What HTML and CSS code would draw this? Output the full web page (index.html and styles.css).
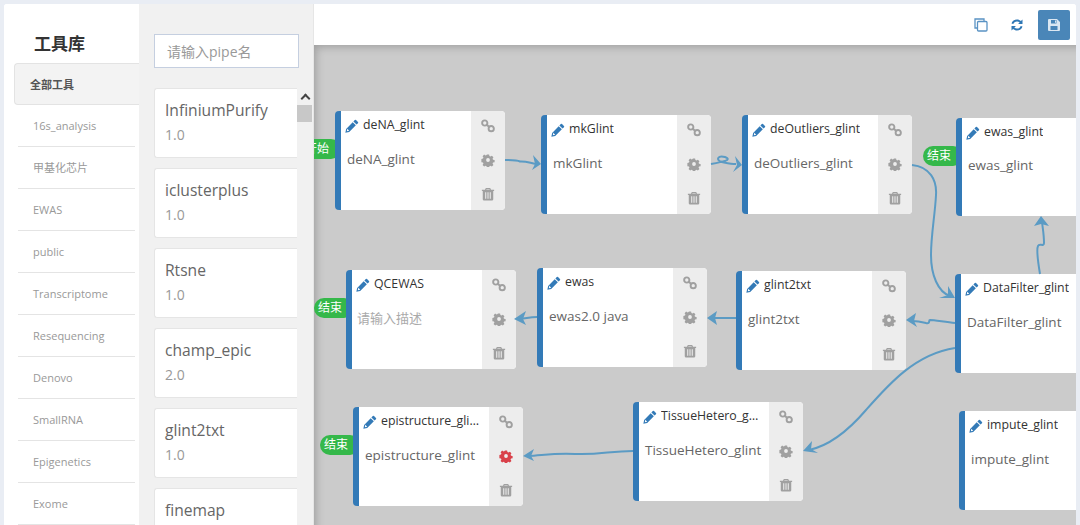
FILE: index.html
```html
<!DOCTYPE html>
<html lang="zh">
<head>
<meta charset="utf-8">
<title>工具库</title>
<link rel="stylesheet" href="styles.css">
</head>
<body>
<svg class="defs" width="0" height="0">
  <defs>
    <symbol id="i-pencil" viewBox="0 0 16 16"><path d="M11.2 1.2a1 1 0 0 1 1.4 0l2.2 2.2a1 1 0 0 1 0 1.4l-1.6 1.6-3.6-3.6zM8.8 3.6l3.6 3.6-7.6 7.6-4.4.9.9-4.4zM2.6 11.2l-.5 2.7 2.7-.5z" fill-rule="evenodd"/></symbol>
    <symbol id="i-link" viewBox="0 0 16 16"><g fill="none" stroke="currentColor" stroke-width="2.200"><circle cx="4.300" cy="4.600" r="3"/><circle cx="11.700" cy="11" r="3"/><path d="M6.500 6.600l3 2.600"/></g></symbol>
    <symbol id="i-cog" viewBox="0 0 16 16"><path fill-rule="evenodd" d="M6.600 1h2.800l.4 2 1.300.6 1.800-1.100 2 2-1.100 1.800.6 1.300 2 .4v2.800l-2 .4-.6 1.300 1.100 1.800-2 2-1.800-1.100-1.300.6-.4 2H6.600l-.4-2-1.300-.6-1.800 1.100-2-2 1.100-1.800-.6-1.300-2-.4V6.600l2-.4.6-1.300-1.100-1.800 2-2 1.800 1.100 1.300-.6zM8 5.600a2.400 2.400 0 1 0 0 4.800 2.400 2.400 0 0 0 0-4.800z" transform="translate(.8 .8) scale(.9)"/></symbol>
    <symbol id="i-trash" viewBox="0 0 16 16"><path fill-rule="evenodd" d="M5.500 1h5l1 2H15v1.500h-1V14a1.500 1.500 0 0 1-1.500 1.500h-9A1.500 1.500 0 0 1 2 14V4.500H1V3h3.500zM6.300 2.500 6 3h4l-.3-.5zM4.800 6v7.500H6V6zm2.600 0v7.500h1.200V6zM10 6v7.500h1.200V6z"/></symbol>
  </defs>
</svg>
<div class="app">
  <aside class="library">
    <h2 class="library-title">工具库</h2>
    <ul class="tabs">
      <li class="tab tab-active">全部工具</li>
      <li class="tab">16s_analysis</li>
      <li class="tab">甲基化芯片</li>
      <li class="tab">EWAS</li>
      <li class="tab">public</li>
      <li class="tab">Transcriptome</li>
      <li class="tab">Resequencing</li>
      <li class="tab">Denovo</li>
      <li class="tab">SmallRNA</li>
      <li class="tab">Epigenetics</li>
      <li class="tab">Exome</li>
    </ul>
  </aside>
  <section class="pipes">
    <input class="search" type="text" placeholder="请输入pipe名">
    <div class="pipe-scroll">
      <div class="pipe-list">
        <div class="pipe"><div class="pipe-name">InfiniumPurify</div><div class="pipe-ver">1.0</div></div>
        <div class="pipe"><div class="pipe-name">iclusterplus</div><div class="pipe-ver">1.0</div></div>
        <div class="pipe"><div class="pipe-name">Rtsne</div><div class="pipe-ver">1.0</div></div>
        <div class="pipe"><div class="pipe-name">champ_epic</div><div class="pipe-ver">2.0</div></div>
        <div class="pipe"><div class="pipe-name">glint2txt</div><div class="pipe-ver">1.0</div></div>
        <div class="pipe"><div class="pipe-name">finemap</div></div>
      </div>
      <div class="scrollbar"><span class="scroll-up"></span><span class="scroll-thumb"></span></div>
    </div>
  </section>
  <main class="workspace">
    <header class="toolbar">
      <button class="tool-btn" type="button" aria-label="复制">
        <svg width="14" height="14" viewBox="0 0 14 14" fill="none" stroke="#5a93c4" stroke-width="1.300"><path d="M3.500 10H1V1h9v2.500"/><rect x="3.500" y="3.500" width="9.500" height="9.500" rx="1"/></svg>
      </button>
      <button class="tool-btn" type="button" aria-label="刷新">
        <svg width="14" height="14" viewBox="0 0 14 14" fill="#2f77b5"><path d="M1.500 5.600C2.200 3 4.400 1.500 7 1.500c1.500 0 2.900.6 3.900 1.500L12.500 1.500v4.600H8l1.700-1.700A4 4 0 0 0 7 3.400c-1.800 0-3.200 1-3.700 2.600zM12.500 8.400c-.7 2.600-2.900 4.100-5.500 4.100-1.500 0-2.900-.6-3.900-1.500L1.500 12.500V7.900H6L4.300 9.600A4 4 0 0 0 7 10.600c1.800 0 3.200-1 3.700-2.600z"/></svg>
      </button>
      <button class="save-btn" type="button" aria-label="保存">
        <svg width="12" height="12" viewBox="0 0 12 12" fill="#dbe7f2"><path fill-rule="evenodd" d="M1 0h8l3 3v8a1 1 0 0 1-1 1H1a1 1 0 0 1-1-1V1a1 1 0 0 1 1-1zm2 1v3.500h5.500V1zm4 .5h1v2.300H7zM2.500 7v4h7V7z"/></svg>
      </button>
    </header>
    <div class="canvas">
      <span class="badge b1">开始</span>
      <span class="badge b2">结束</span>
      <span class="badge b3">结束</span>
      <span class="badge b4">结束</span>

      <article class="node n1"><div class="node-main"><div class="node-title"><svg class="pencil"><use href="#i-pencil"/></svg><span class="node-name">deNA_glint</span></div><div class="node-desc">deNA_glint</div></div><div class="node-actions"><svg class="act"><use href="#i-link"/></svg><svg class="act"><use href="#i-cog"/></svg><svg class="act"><use href="#i-trash"/></svg></div></article>

      <article class="node n2"><div class="node-main"><div class="node-title"><svg class="pencil"><use href="#i-pencil"/></svg><span class="node-name">mkGlint</span></div><div class="node-desc">mkGlint</div></div><div class="node-actions"><svg class="act"><use href="#i-link"/></svg><svg class="act"><use href="#i-cog"/></svg><svg class="act"><use href="#i-trash"/></svg></div></article>

      <article class="node n3"><div class="node-main"><div class="node-title"><svg class="pencil"><use href="#i-pencil"/></svg><span class="node-name">deOutliers_glint</span></div><div class="node-desc">deOutliers_glint</div></div><div class="node-actions"><svg class="act"><use href="#i-link"/></svg><svg class="act"><use href="#i-cog"/></svg><svg class="act"><use href="#i-trash"/></svg></div></article>

      <article class="node n4"><div class="node-main"><div class="node-title"><svg class="pencil"><use href="#i-pencil"/></svg><span class="node-name">ewas_glint</span></div><div class="node-desc">ewas_glint</div></div><div class="node-actions"><svg class="act"><use href="#i-link"/></svg><svg class="act"><use href="#i-cog"/></svg><svg class="act"><use href="#i-trash"/></svg></div></article>

      <article class="node n5"><div class="node-main"><div class="node-title"><svg class="pencil"><use href="#i-pencil"/></svg><span class="node-name">QCEWAS</span></div><div class="node-desc node-empty">请输入描述</div></div><div class="node-actions"><svg class="act"><use href="#i-link"/></svg><svg class="act"><use href="#i-cog"/></svg><svg class="act"><use href="#i-trash"/></svg></div></article>

      <article class="node n6"><div class="node-main"><div class="node-title"><svg class="pencil"><use href="#i-pencil"/></svg><span class="node-name">ewas</span></div><div class="node-desc">ewas2.0 java</div></div><div class="node-actions"><svg class="act"><use href="#i-link"/></svg><svg class="act"><use href="#i-cog"/></svg><svg class="act"><use href="#i-trash"/></svg></div></article>

      <article class="node n7"><div class="node-main"><div class="node-title"><svg class="pencil"><use href="#i-pencil"/></svg><span class="node-name">glint2txt</span></div><div class="node-desc">glint2txt</div></div><div class="node-actions"><svg class="act"><use href="#i-link"/></svg><svg class="act"><use href="#i-cog"/></svg><svg class="act"><use href="#i-trash"/></svg></div></article>

      <article class="node n8"><div class="node-main"><div class="node-title"><svg class="pencil"><use href="#i-pencil"/></svg><span class="node-name">DataFilter_glint</span></div><div class="node-desc">DataFilter_glint</div></div><div class="node-actions"><svg class="act"><use href="#i-link"/></svg><svg class="act"><use href="#i-cog"/></svg><svg class="act"><use href="#i-trash"/></svg></div></article>

      <article class="node n9"><div class="node-main"><div class="node-title"><svg class="pencil"><use href="#i-pencil"/></svg><span class="node-name">epistructure_glint</span></div><div class="node-desc">epistructure_glint</div></div><div class="node-actions"><svg class="act"><use href="#i-link"/></svg><svg class="act act-error"><use href="#i-cog"/></svg><svg class="act"><use href="#i-trash"/></svg></div></article>

      <article class="node n10"><div class="node-main"><div class="node-title"><svg class="pencil"><use href="#i-pencil"/></svg><span class="node-name">TissueHetero_glint</span></div><div class="node-desc">TissueHetero_glint</div></div><div class="node-actions"><svg class="act"><use href="#i-link"/></svg><svg class="act"><use href="#i-cog"/></svg><svg class="act"><use href="#i-trash"/></svg></div></article>

      <article class="node n11"><div class="node-main"><div class="node-title"><svg class="pencil"><use href="#i-pencil"/></svg><span class="node-name">impute_glint</span></div><div class="node-desc">impute_glint</div></div><div class="node-actions"><svg class="act"><use href="#i-link"/></svg><svg class="act"><use href="#i-cog"/></svg><svg class="act"><use href="#i-trash"/></svg></div></article>

      <svg class="links" viewBox="314 45 762 480">
        <g class="link-lines">
          <path d="M505 160C513 160 517 160 520 161.500C526 161 530 163 536 164"/>
          <path d="M711 164C722 162 733 160 725 157C718 155 715 160 722 162C727 163 731 164 736 164"/>
          <path d="M912 165C930 167 937 180 936 195C935 215 931 235 931 255C931 275 938 292 950 296"/>
          <path d="M1040 274C1038 262 1036 250 1038 246C1039 243 1044 247 1044 243C1044 235 1043 230 1042 222"/>
          <path d="M955 323C945 322 934 320 930 320C928 320 931 324 926 323C922 322 918 321 912 321"/>
          <path d="M955 348C915 354 888 385 866 410C848 431 828 446 809 450"/>
          <path d="M736 318H712"/>
          <path d="M537 317C530 317 528 318 520 319"/>
          <path d="M633 451C610 451 600 455 575 454C555 453 545 455 528 456"/>
        </g>
        <g class="link-heads">
          <path d="M541 164L533 155 535 164 532 170z"/>
          <path d="M742 165L735 156 737 165 733 172z"/>
          <path d="M955 298L948 286 948 295 939 298z"/>
          <path d="M1041 216L1034 226 1041 224 1049 226z"/>
          <path d="M906 320L916 313 914 321 917 327z"/>
          <path d="M803 451L812 441 811 449 818 453z"/>
          <path d="M707 318L717 311 715 318 717 325z"/>
          <path d="M514 319L526 311 523 319 526 325z"/>
          <path d="M523 456L534 449 531 456 534 461z"/>
        </g>
      </svg>
    </div>
  </main>
</div>
</body>
</html>
```

FILE: styles.css
```css
* { box-sizing: border-box; }
html, body { height: 100%; }
body {
  margin: 0;
  padding: 4px 4px 0;
  overflow: hidden;
  background: #e9edf4;
  font-family: "Open Sans", "Noto Sans CJK SC", sans-serif;
  color: #666;
}
.defs { position: absolute; }
.app {
  display: flex;
  height: 521px;
  background: #fff;
  border-radius: 3px 3px 0 0;
  overflow: hidden;
}
.library {
  flex: 0 0 135px;
  background: #fff;
  padding-top: 29px;
  padding-left: 10px;
}
.library-title {
  margin: 0 0 0 20px;
  height: 30px;
  font-size: 17px;
  line-height: 22px;
  font-weight: 700;
  color: #333;
}
.tabs { list-style: none; margin: 0; padding: 0; }
.tab {
  height: 42px;
  line-height: 41px;
  margin: 0 4px;
  padding-left: 15px;
  font-size: 11px;
  color: #999;
  border-bottom: 1px solid #e4e4e4;
  white-space: nowrap;
}
.tab-active {
  margin: 0;
  padding-left: 15px;
  background: #f3f3f3;
  border: 1px solid #e3e3e3;
  border-right: 0;
  border-radius: 4px 0 0 4px;
  font-weight: 700;
  color: #555;
}
.pipes {
  flex: 0 0 175px;
  display: flex;
  flex-direction: column;
  background: #f1f1f1;
  padding-top: 30px;
  border-right: 1px solid #e6e6e6;
}
.search {
  flex: none;
  width: 145px;
  height: 34px;
  margin-left: 15px;
  padding: 0 12px;
  border: 1px solid #c5cfe0;
  background: #fff;
  font: 14px "Open Sans", "Noto Sans CJK SC", sans-serif;
  color: #666;
}
.search::placeholder { color: #999; opacity: 1; }
.pipe-scroll {
  flex: 1;
  min-height: 0;
  display: flex;
  margin-top: 20px;
}
.pipe-list {
  flex: 0 0 158px;
  padding-left: 15px;
  overflow: hidden;
}
.pipe {
  height: 70px;
  margin-bottom: 10px;
  padding: 10px 10px;
  background: #fff;
  border: 1px solid #e5e5e5;
  border-right: 0;
  border-radius: 3px 0 0 3px;
}
.pipe-name { font-size: 15.600px; line-height: 22px; color: #666; white-space: nowrap; }
.pipe-ver { margin-top: 3px; font-size: 14px; line-height: 22px; color: #999; }
.scrollbar {
  flex: 0 0 15px;
  display: flex;
  flex-direction: column;
  align-items: stretch;
}
.scroll-up {
  position: relative;
  height: 17px;
}
.scroll-up::before {
  content: "";
  position: absolute;
  left: 5px;
  top: 7px;
  width: 5px;
  height: 5px;
  border-left: 2px solid #444;
  border-top: 2px solid #444;
  transform: rotate(45deg);
}
.scroll-thumb { height: 17px; background: #c8c8c8; }
.workspace {
  flex: 1;
  min-width: 0;
  display: flex;
  flex-direction: column;
}
.toolbar {
  flex: 0 0 41px;
  display: flex;
  justify-content: flex-end;
  align-items: flex-start;
  padding: 6px 6px 0 0;
  background: #fff;
}
.tool-btn {
  width: 36px;
  height: 30px;
  padding: 0;
  border: 0;
  background: none;
  display: flex;
  align-items: center;
  justify-content: center;
}
.tool-btn + .tool-btn { margin-right: 3px; }
.save-btn {
  width: 32px;
  height: 30px;
  padding: 0;
  border: 0;
  border-radius: 2px;
  background: #4a86b8;
  display: flex;
  align-items: center;
  justify-content: center;
}
.canvas {
  position: relative;
  flex: 1;
  overflow: hidden;
  background: #cbcbcb;
  box-shadow: inset 8px 8px 8px -6px rgba(0,0,0,.22);
}
.links { position: absolute; left: 0; top: 0; width: 762px; height: 480px; z-index: 3; }
.link-lines path { fill: none; stroke: #5b9bc4; stroke-width: 2; }
.link-heads path { fill: #5b9bc4; }
.badge {
  position: absolute;
  width: 40px;
  height: 20px;
  padding-left: 4px;
  border-radius: 10px;
  background: #35b84a;
  color: #fff;
  font-size: 12px;
  line-height: 20px;
  white-space: nowrap;
}
.b1 { left: -13px; top: 94px; }
.b2 { left: 609px; top: 101px; }
.b3 { left: 0; top: 253px; }
.b4 { left: 6px; top: 390px; }
.node {
  position: absolute;
  width: 170px;
  height: 99px;
  display: flex;
  background: #fff;
  border-left: 6px solid #337ab7;
  border-radius: 4px;
  overflow: hidden;
  z-index: 2;
}
.node-main { flex: 1; min-width: 0; padding: 2px 0 0 5px; }
.node-title { display: flex; align-items: center; height: 22px; }
.pencil { flex: none; width: 14px; height: 14px; margin: 3px 4px 0 -1px; fill: #337ab7; }
.node-name {
  max-width: 99px;
  overflow: hidden;
  text-overflow: ellipsis;
  white-space: nowrap;
  font-size: 12.300px;
  color: #333;
}
.node-desc { margin-top: 13px; padding-left: 1px; font-size: 13.500px; line-height: 22px; color: #666; white-space: nowrap; }
.node-empty { padding-left: 0; color: #aaa; font-size: 13px; }
.node-actions {
  flex: 0 0 34px;
  display: flex;
  flex-direction: column;
  align-items: center;
  justify-content: space-between;
  padding: 8px 0 9px;
  background: #ededed;
}
.act { width: 14px; height: 14px; color: #a0a0a0; fill: #a0a0a0; }
.act-error { color: #d9414a; fill: #d9414a; }
.n1 { left: 21px; top: 66px; }
.n2 { left: 227px; top: 70px; }
.n3 { left: 428px; top: 70px; }
.n4 { left: 642px; top: 73px; height: 98px; }
.n4 .node-desc { margin-top: 12px; }
.n5 { left: 32px; top: 225px; }
.n6 { left: 223px; top: 223px; }
.n7 { left: 422px; top: 226px; }
.n8 { left: 641px; top: 229px; }
.n9 { left: 39px; top: 362px; }
.n10 { left: 319px; top: 357px; }
.n11 { left: 645px; top: 366px; }
```
